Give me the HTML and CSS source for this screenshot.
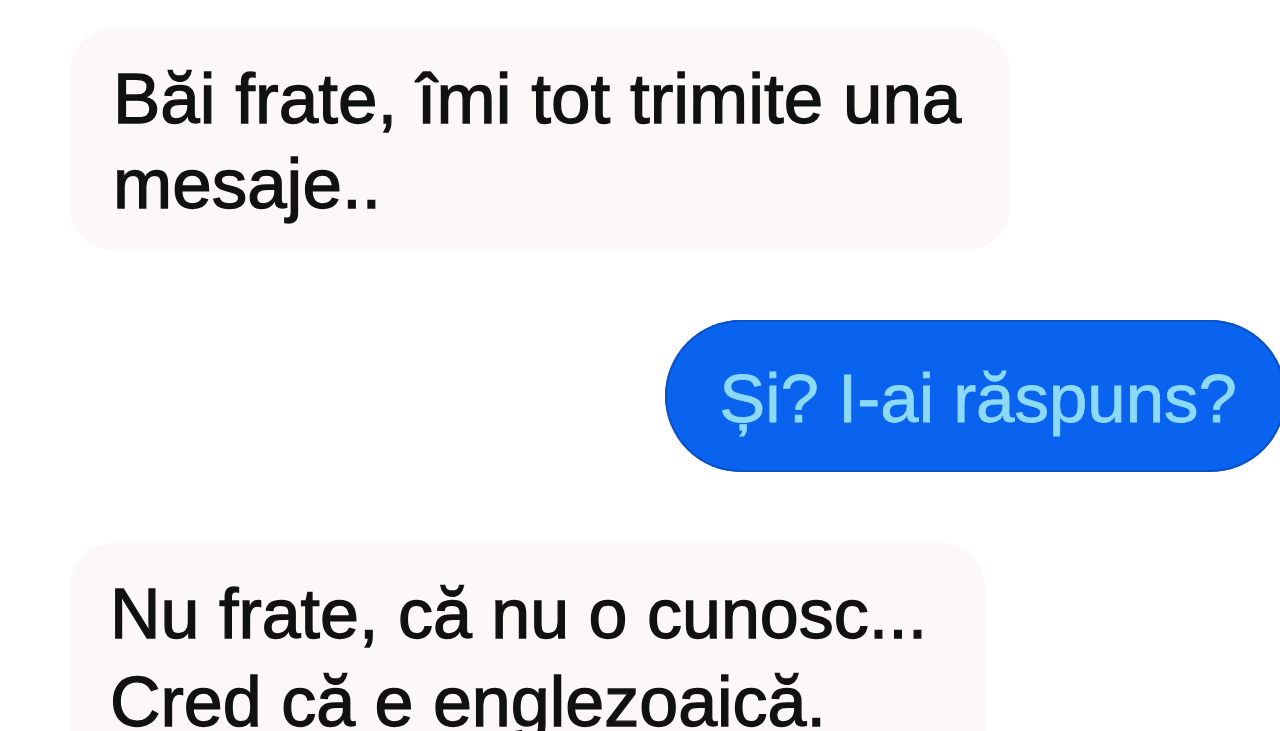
FILE: index.html
```html
<!DOCTYPE html>
<html lang="ro">
<head>
<meta charset="utf-8">
<title>Conversație</title>
<link rel="stylesheet" href="styles.css">
</head>
<body>
<main class="chat">
  <div class="bubble bubble-in bubble-first">Băi frate, îmi tot trimite una<br>mesaje..</div>
  <div class="bubble bubble-out">Și? I-ai răspuns?</div>
  <div class="bubble bubble-in bubble-last">Nu frate, că nu o cunosc...<br>Cred că e englezoaică.</div>
</main>
</body>
</html>
```
FILE: styles.css
```css
html, body {
  margin: 0;
  padding: 0;
  background: #ffffff;
}

body {
  width: 1280px;
  height: 731px;
  overflow: hidden;
  font-family: "Liberation Sans", Arial, sans-serif;
}

.chat {
  display: flex;
  flex-direction: column;
  align-items: flex-start;
  padding-top: 28px;
}

.bubble {
  font-size: 70px;
  line-height: 85px;
  white-space: nowrap;
  box-sizing: border-box;
  -webkit-text-stroke: 1.3px currentColor;
}

.bubble-in {
  margin-left: 70px;
  background: #fdf8f8;
  color: #111111;
  border-radius: 44px;
}

.bubble-first {
  width: 940px;
  padding: 28px 20px 24px 43px;
  font-size: 71px;
}

.bubble-out {
  align-self: flex-end;
  margin-top: 70px;
  margin-right: -6px;
  padding: 36px 49px 31px 54px;
  font-size: 69px;
  background: #0a63ee;
  color: #8cdaf8;
  border-radius: 76px;
  box-shadow: inset 0 0 0 2px #0a52c8;
  -webkit-text-stroke: 0.8px currentColor;
}

.bubble-last {
  margin-top: 71px;
  width: 915px;
  padding: 27px 20px 30px 40px;
  line-height: 88px;
}
```
